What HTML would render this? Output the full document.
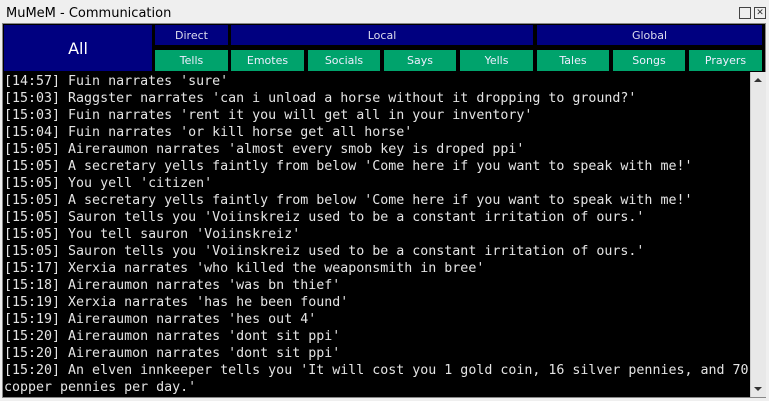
<!DOCTYPE html>
<html><head><style>
body{margin:0;width:769px;height:401px;background:#efefef;overflow:hidden;position:relative;font-family:"DejaVu Sans","Liberation Sans",sans-serif}
.title{position:absolute;left:6px;top:6px;font-size:13px;color:#000}
.frame{position:absolute;left:2px;top:23px;width:764px;height:375px;background:#000;border:1px solid #888;box-sizing:border-box}
.b{position:absolute;color:#dde;font-size:11px;text-align:center;display:flex;align-items:center;justify-content:center}
.n{background:#000080}
.g{background:#00a36c;color:#eef}
.log{position:absolute;left:4px;top:73px;width:746px;height:324px;overflow:hidden;font-family:"DejaVu Sans Mono",monospace;font-size:13.3px;line-height:17px;color:#e4e4e4;white-space:pre}
.sb{position:absolute;left:750px;top:72px;width:15px;height:325px;background:#e8e8e8;border-left:1px solid #ccc}
.ic{position:absolute;top:7px;width:10px;height:10px;border:1px solid #444;font-size:9px;line-height:10px;text-align:center;color:#333}
</style></head><body>
<div class="title">MuMeM - Communication</div>
<div class="ic" style="left:739px"></div><div class="ic" style="left:754px">✕</div>
<div class="frame"></div>
<div class="b n" style="left:4px;top:25px;width:148px;height:46px;font-size:16px;color:#fff">All</div>
<div class="b n" style="left:155px;top:25px;width:73px;height:20px">Direct</div>
<div class="b n" style="left:231px;top:25px;width:302px;height:20px">Local</div>
<div class="b n" style="left:537px;top:25px;width:225px;height:20px">Global</div>
<div class="b g" style="left:155px;top:50px;width:73px;height:21px">Tells</div>
<div class="b g" style="left:231px;top:50px;width:73px;height:21px">Emotes</div>
<div class="b g" style="left:308px;top:50px;width:72px;height:21px">Socials</div>
<div class="b g" style="left:384px;top:50px;width:72px;height:21px">Says</div>
<div class="b g" style="left:460px;top:50px;width:73px;height:21px">Yells</div>
<div class="b g" style="left:537px;top:50px;width:72px;height:21px">Tales</div>
<div class="b g" style="left:613px;top:50px;width:72px;height:21px">Songs</div>
<div class="b g" style="left:689px;top:50px;width:73px;height:21px">Prayers</div>
<div class="log">[14:57] Fuin narrates 'sure'
[15:03] Raggster narrates 'can i unload a horse without it dropping to ground?'
[15:03] Fuin narrates 'rent it you will get all in your inventory'
[15:04] Fuin narrates 'or kill horse get all horse'
[15:05] Aireraumon narrates 'almost every smob key is droped ppi'
[15:05] A secretary yells faintly from below 'Come here if you want to speak with me!'
[15:05] You yell 'citizen'
[15:05] A secretary yells faintly from below 'Come here if you want to speak with me!'
[15:05] Sauron tells you 'Voiinskreiz used to be a constant irritation of ours.'
[15:05] You tell sauron 'Voiinskreiz'
[15:05] Sauron tells you 'Voiinskreiz used to be a constant irritation of ours.'
[15:17] Xerxia narrates 'who killed the weaponsmith in bree'
[15:18] Aireraumon narrates 'was bn thief'
[15:19] Xerxia narrates 'has he been found'
[15:19] Aireraumon narrates 'hes out 4'
[15:20] Aireraumon narrates 'dont sit ppi'
[15:20] Aireraumon narrates 'dont sit ppi'
[15:20] An elven innkeeper tells you 'It will cost you 1 gold coin, 16 silver pennies, and 70
copper pennies per day.'</div>
<div class="sb"><div style="position:absolute;left:3px;top:6px;border:4px solid transparent;border-bottom:4px solid #333;border-top:0"></div><div style="position:absolute;left:3px;bottom:6px;border:4px solid transparent;border-top:4px solid #333;border-bottom:0"></div></div>
</body></html>
